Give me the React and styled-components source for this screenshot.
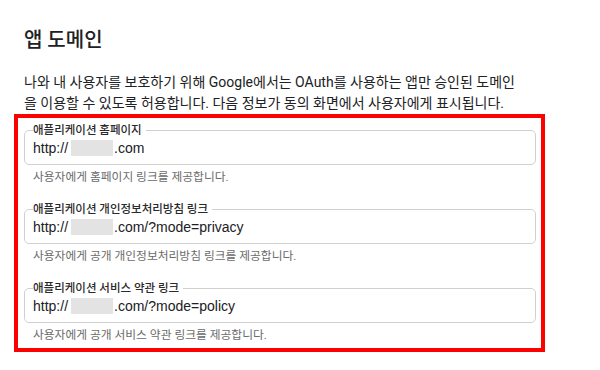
import styled, { createGlobalStyle } from 'styled-components';

const GlobalStyle = createGlobalStyle`
  body {
    margin: 0;
    background: #fff;
    font-family: Roboto, "Noto Sans CJK KR", sans-serif;
    color: #202124;
  }
`;

const Page = styled.div`
  padding: 25px 55px 0 24px;
`;

const Title = styled.h2`
  margin: 0;
  font-size: 20px;
  font-weight: 500;
  line-height: 30px;
`;

const Intro = styled.p`
  margin: 17px 0 0;
  width: 500px;
  font-size: 14px;
  line-height: 21px;
  color: #202124;
`;

const Highlight = styled.div`
  margin: 0 0 0 -10px;
  border: 4px solid #ff0000;
  padding: 6px 5px 6px 6px;
  display: flex;
  flex-direction: column;
  gap: 19px;
`;

const Field = styled.div`
  display: flex;
  flex-direction: column;
`;

const Outline = styled.fieldset`
  margin: 0;
  padding: 0 8px 4px;
  border: 1px solid #d0d0d0;
  border-radius: 5px;
  min-width: 0;
`;

const Label = styled.legend`
  padding: 0 4px 0 0;
  font-size: 11.5px;
  line-height: 12px;
  font-weight: 500;
  color: #2a2a2a;
`;

const Value = styled.div`
  display: flex;
  align-items: center;
  height: 24px;
  font-family: "Liberation Sans", Arial, sans-serif;
  font-size: 14px;
  color: #202124;
`;

const Redacted = styled.span`
  display: inline-block;
  width: 42px;
  height: 16px;
  margin: 0 1px 0 3px;
  background: #e3e3e3;
`;

const Helper = styled.div`
  margin-top: 5px;
  padding-left: 9px;
  font-size: 11.75px;
  line-height: 14px;
  color: #6b6b6b;
`;

const fields = [
  {
    label: '애플리케이션 홈페이지',
    suffix: '.com',
    helper: '사용자에게 홈페이지 링크를 제공합니다.',
  },
  {
    label: '애플리케이션 개인정보처리방침 링크',
    suffix: '.com/?mode=privacy',
    helper: '사용자에게 공개 개인정보처리방침 링크를 제공합니다.',
  },
  {
    label: '애플리케이션 서비스 약관 링크',
    suffix: '.com/?mode=policy',
    helper: '사용자에게 공개 서비스 약관 링크를 제공합니다.',
  },
];

const App = () => (
  <>
    <GlobalStyle />
    <Page>
      <Title>앱 도메인</Title>
      <Intro>
        나와 내 사용자를 보호하기 위해 Google에서는 OAuth를 사용하는 앱만 승인된 도메인을 이용할 수 있도록 허용합니다. 다음 정보가 동의 화면에서 사용자에게 표시됩니다.
      </Intro>
      <Highlight>
        {fields.map((f) => (
          <Field key={f.label}>
            <Outline>
              <Label>{f.label}</Label>
              <Value>
                http://<Redacted />{f.suffix}
              </Value>
            </Outline>
            <Helper>{f.helper}</Helper>
          </Field>
        ))}
      </Highlight>
    </Page>
  </>
);

export default App;
